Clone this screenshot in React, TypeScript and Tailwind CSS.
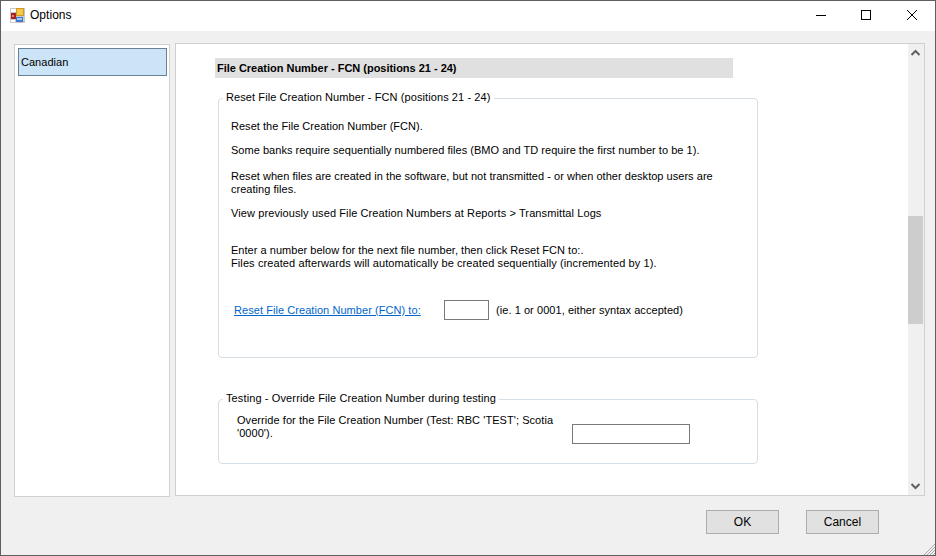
import React from "react";

function Caption() {
  return (
    <div className="flex items-center h-[30px] bg-white shrink-0">
      <svg width="15" height="15" viewBox="0 0 15 15" className="ml-[9px] mt-[-1px] shrink-0">
        <rect x="0" y="0" width="15" height="15" fill="#c8c8c8" />
        <rect x="1" y="1" width="5" height="3" fill="#ffffff" />
        <rect x="1" y="12" width="4" height="2" fill="#ffffff" />
        <rect x="6" y="0" width="8" height="8" fill="#d09a20" />
        <rect x="7" y="1" width="6" height="6" fill="#f5c84c" />
        <rect x="1" y="5" width="5" height="6" fill="#a82020" />
        <rect x="2" y="7" width="2" height="2" fill="#e88080" />
        <rect x="6" y="9" width="7" height="5" fill="#3f78d0" />
        <rect x="7" y="10" width="5" height="2" fill="#a9c8ef" />
      </svg>
      <span className="ml-[5px] text-[12px] text-black mt-[-1px]">Options</span>
      <div className="ml-auto flex items-center">
        <svg width="46" height="30" viewBox="0 0 46 30">
          <path d="M19 14.5H29" stroke="#000" strokeWidth="1" />
        </svg>
        <svg width="46" height="30" viewBox="0 0 46 30">
          <rect x="18.5" y="9.5" width="9" height="9" fill="none" stroke="#000" />
        </svg>
        <svg width="46" height="30" viewBox="0 0 46 30">
          <path d="M18 9L28 19M28 9L18 19" stroke="#000" strokeWidth="1" fill="none" />
        </svg>
      </div>
    </div>
  );
}

function ScrollBar() {
  return (
    <div className="w-[16px] shrink-0 bg-[#f0f0f0] flex flex-col items-start">
      <svg width="15" height="17" viewBox="0 0 15 17" className="shrink-0">
        <path d="M3.5 11L7.5 7L11.5 11" stroke="#606060" strokeWidth="2" fill="none" />
      </svg>
      <div className="h-[155px] shrink-0" />
      <div className="w-[15px] h-[108px] bg-[#cdcdcd] shrink-0" />
      <div className="flex-1" />
      <svg width="15" height="17" viewBox="0 0 15 17" className="shrink-0">
        <path d="M3.5 6L7.5 10L11.5 6" stroke="#606060" strokeWidth="2" fill="none" />
      </svg>
    </div>
  );
}

export default function App() {
  return (
    <div className="w-[936px] h-[556px] overflow-hidden flex flex-col bg-[#f0f0f0] border border-[#5f5f5f] text-black font-['Liberation_Sans',Arial,sans-serif] text-[11px] tracking-[0.03px] leading-[13px] relative">
      <Caption />
      <div className="flex items-start mt-[12px] ml-[13px]">
        <div className="w-[156px] h-[453px] mt-[1px] bg-white border border-[#d0d0d0] pt-[3px] pl-[3px] pr-[2px] shrink-0">
          <div className="h-[28px] bg-[#cce4f7] border border-[#6b7f95] flex items-center pl-[2px]">Canadian</div>
        </div>
        <div className="ml-[5px] w-[750px] h-[453px] bg-white border border-[#d0d0d0] flex shrink-0">
          <div className="flex-1 pl-[39px] pt-[14px]">
            <div className="w-[518px] h-[20px] bg-[#e0e0e0] font-bold tracking-[-0.015px] flex items-center pl-[2px]">File Creation Number - FCN (positions 21 - 24)</div>

            <div className="relative mt-[20px] ml-[3px] w-[540px] h-[260px] border border-[#d5dfe5] rounded-[4px] pl-[12px] pr-[10px] pt-[21px]">
              <div className="absolute left-[4px] top-[-8px] bg-white px-[3px] tracking-[0.09px]">Reset File Creation Number - FCN (positions 21 - 24)</div>
              <p>Reset the File Creation Number (FCN).</p>
              <p className="mt-[11px]">Some banks require sequentially numbered files (BMO and TD require the first number to be 1).</p>
              <p className="mt-[13px]">Reset when files are created in the software, but not transmitted - or when other desktop users are creating files.</p>
              <p className="mt-[11px] tracking-[0.1px]">View previously used File Creation Numbers at Reports &gt; Transmittal Logs</p>
              <p className="mt-[24px]">Enter a number below for the next file number, then click Reset FCN to:.<br /><span className="tracking-[0.1px]">Files created afterwards will automatically be created sequentially (incremented by 1).</span></p>
              <div className="flex items-center mt-[30px] ml-[3px]">
                <a className="text-[#0066cc] underline tracking-[0.06px] w-[210px] shrink-0">Reset File Creation Number (FCN) to:</a>
                <div className="w-[45px] h-[20px] border border-[#7a7a7a] bg-white shrink-0" />
                <span className="ml-[7px] tracking-[0.06px]">(ie. 1 or 0001, either syntax accepted)</span>
              </div>
            </div>

            <div className="relative mt-[41px] ml-[3px] w-[540px] h-[65px] border border-[#d5dfe5] rounded-[4px] pl-[18px] pt-[14px]">
              <div className="absolute left-[4px] top-[-8px] bg-white px-[3px] tracking-[0.12px]">Testing - Override File Creation Number during testing</div>
              <div className="flex items-start">
                <p className="w-[320px] shrink-0 tracking-[0.06px]">Override for the File Creation Number (Test: RBC 'TEST'; Scotia '0000').</p>
                <div className="ml-[15px] mt-[10px] w-[118px] h-[20px] border border-[#7a7a7a] bg-white shrink-0" />
              </div>
            </div>
          </div>
          <ScrollBar />
        </div>
      </div>
      <div className="flex justify-end mt-[13px] mr-[56px] gap-[27px]">
        <div className="w-[73px] h-[24px] bg-[#e1e1e1] border border-[#adadad] flex items-center justify-center text-[12px]">OK</div>
        <div className="w-[73px] h-[24px] bg-[#e1e1e1] border border-[#adadad] flex items-center justify-center text-[12px]">Cancel</div>
      </div>
      <svg width="12" height="12" viewBox="0 0 12 12" className="absolute right-0 bottom-0">
        <path d="M1 12L12 1M4 12L12 4M7 12L12 7M10 12L12 10" stroke="#a8a8a8" strokeWidth="1" />
      </svg>
    </div>
  );
}
